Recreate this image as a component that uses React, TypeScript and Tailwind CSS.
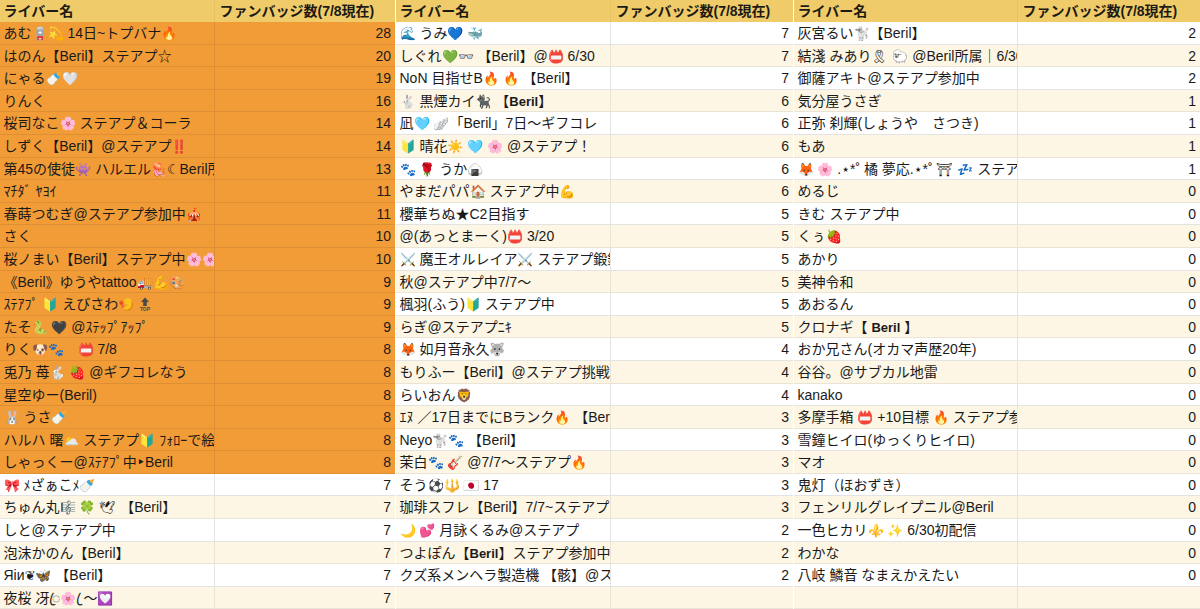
const col1: [string, number][] = [
  ["あむ🪫💫 14日~トプバナ🔥", 28],
  ["はのん【Beril】ステアプ☆", 20],
  ["にゃる🍼🤍", 19],
  ["りんく", 16],
  ["桜司なこ🌸 ステアプ＆コーラ", 14],
  ["しずく【Beril】@ステアプ‼️", 14],
  ["第45の使徒👾 ハルエル🪼☾Beril所属", 13],
  ["ﾏﾁﾀﾞ ﾔﾖｲ", 11],
  ["春蒔つむぎ@ステアプ参加中🎪", 11],
  ["さく", 10],
  ["桜ノまい【Beril】ステアプ中🌸🌸", 10],
  ["《Beril》ゆうやtattoo🚚💪🎨", 9],
  ["ｽﾃｱﾌﾟ 🔰 えびさわ🍤 🔝", 9],
  ["たそ🐍 🖤 @ｽﾃｯﾌﾟｱｯﾌﾟ", 9],
  ["りく🐶🐾　📛 7/8", 8],
  ["兎乃 苺🐇 🍓 @ギフコレなう", 8],
  ["星空ゆー(Beril)", 8],
  ["🐰 うさ🍼", 8],
  ["ハルハ 曙⛅ ステアプ🔰 ﾌｫﾛｰで絵", 8],
  ["しゃっくー@ｽﾃｱﾌﾟ中‣Beril", 8],
  ["🎀 ﾒざぁこﾒ🍼", 7],
  ["ちゅん丸🎼 🍀 🕊 【Beril】", 7],
  ["しと@ステアプ中", 7],
  ["泡沫かのん【Beril】", 7],
  ["Яiи❦🦋 【Beril】", 7],
  ["夜桜 冴ꦿ🌸 ꦿ〜💟", 7],
];

const col2: [string, number | null][] = [
  ["🌊 うみ💙 🐳", 7],
  ["しぐれ💚👓 【Beril】@📛 6/30", 7],
  ["NoN 目指せB🔥 🔥 【Beril】", 7],
  ["🐇 黒煙カイ🐈‍⬛ 【*Beril*】", 6],
  ["凪🩵 🪽「Beril」7日〜ギフコレ", 6],
  ["🔰 晴花☀️ 🩵 🌸 @ステアプ！", 6],
  ["🐾 🌹 うか🍙", 6],
  ["やまだパパ🏠 ステアプ中💪", 6],
  ["櫻華ちぬ★C2目指す", 5],
  ["@(あっとまーく)📛 3/20", 5],
  ["⚔️ 魔王オルレイア⚔️ ステアプ鍛錬中", 5],
  ["秋@ステアプ中7/7〜", 5],
  ["楓羽(ふう)🔰 ステアプ中", 5],
  ["らぎ@ステアプﾆｷ", 5],
  ["🦊 如月音永久🐺", 4],
  ["もりふー【Beril】@ステアプ挑戦中", 4],
  ["らいおん🦁", 4],
  ["ｴﾇ ／17日までにBランク🔥 【Beril】", 3],
  ["Neyo🐩🐾 【Beril】", 3],
  ["茉白🐾 🎸 @7/7〜ステアプ🔥", 3],
  ["そう⚽️🔱 🇯🇵 17", 3],
  ["珈琲スフレ【Beril】7/7~ステアプ", 3],
  ["🌙 💕 月詠くるみ@ステアプ", 2],
  ["つよぽん【*Beril*】ステアプ参加中", 2],
  ["クズ系メンヘラ製造機 【骸】@ステアプ", 2],
  ["", null],
];

const col3: [string, number | null][] = [
  ["灰宮るい🐩【Beril】", 2],
  ["結淺 みあり🎗 🐑 @Beril所属｜6/30", 2],
  ["御薩アキト@ステアプ参加中", 2],
  ["気分屋うさぎ", 1],
  ["正弥 刹輝(しょうや　さつき)", 1],
  ["もあ", 1],
  ["🦊 🌸 .⋆*˚ 橘 夢応.⋆*˚ ⛩ 💤 ステアプ", 1],
  ["めるじ", 0],
  ["きむ ステアプ中", 0],
  ["くぅ🍓", 0],
  ["あかり", 0],
  ["美神令和", 0],
  ["あおるん", 0],
  ["クロナギ【 *Beril* 】", 0],
  ["おか兄さん(オカマ声歴20年)", 0],
  ["谷谷。@サブカル地雷", 0],
  ["kanako", 0],
  ["多摩手箱 📛 +10目標 🔥 ステアプ参加中", 0],
  ["雪鐘ヒイロ(ゆっくりヒイロ)", 0],
  ["マオ", 0],
  ["鬼灯（ほおずき）", 0],
  ["フェンリルグレイプニル@Beril", 0],
  ["一色ヒカリ⚜️ ✨ 6/30初配信", 0],
  ["わかな", 0],
  ["八岐 鱗音 なまえかえたい", 0],
  ["", null],
];

// noto emoji runs wider than the screenshot's, so they get a smaller size
const emojiRe = /((?![★☆☾])\p{Extended_Pictographic}\uFE0F?(?:\u200D\p{Extended_Pictographic}\uFE0F?)*|[\u{1F1E6}-\u{1F1FF}]{2}|\*Beril\*)/u;

function TopMark() {
  return (
    <svg viewBox="0 0 14 14" className="inline-block w-[14px] h-[14px] align-[-2px]">
      <path d="M7 0.5 L11 5 H8.8 V9 H5.2 V5 H3 Z" fill="#4a4a46" />
      <text x="7" y="13.5" textAnchor="middle" fontSize="5" fontWeight="700" fill="#4a4a46">TOP</text>
    </svg>
  );
}

function Name({ text }: { text: string }) {
  const parts = text.split(emojiRe);
  return (
    <>
      {parts.map((p, i) => {
        if (i % 2 === 0) return p;
        if (p === "*Beril*") return <b key={i} className="text-[13px]">Beril</b>;
        if (p === "🔝") return <TopMark key={i} />;
        return <span key={i} className="text-[13px]">{p}</span>;
      })}
    </>
  );
}

function Block({ rows, orange = 0 }: { rows: [string, number | null][]; orange?: number }) {
  return (
    <div className="flex flex-col">
      <div className="flex h-[22px] bg-[#f0cb69] font-bold text-[#1c1a14]">
        <div className="w-[var(--n)] pl-[3.5px] leading-[23px] border-r border-[#e8c363]">ライバー名</div>
        <div className="flex-1 min-w-0 pl-[4.5px] leading-[23px] whitespace-nowrap overflow-hidden">ファンバッジ数(7/8現在)</div>
      </div>
      {rows.map(([name, count], i) => {
        const bg = i < orange ? "bg-[#f29c37] border-[#de8f33]" : (i - orange) % 2 === 0 ? "bg-white border-[#e3e3e3]" : "bg-[#fdf6e4] border-[#e9e4d6]";
        return (
          <div key={i} className={`flex h-[22.6px] border-b ${bg}`}>
            <div className={`w-[var(--n)] pl-[3.5px] leading-[23px] whitespace-nowrap overflow-hidden border-r ${bg}`}>
              <Name text={name} />
            </div>
            <div className="flex-1 pr-1 leading-[23px] text-right">{count}</div>
          </div>
        );
      })}
    </div>
  );
}

export default function App() {
  return (
    <div className="flex w-[1200px] h-[609px] overflow-hidden bg-white text-[14px] text-[#1a1a1a] font-['Liberation_Sans','Noto_Sans_CJK_JP','DejaVu_Sans',sans-serif]">
      <div className="[--n:215px] w-[395px] mr-px">
        <Block rows={col1} orange={20} />
      </div>
      <div className="[--n:215px] w-[397px] mr-px">
        <Block rows={col2} />
      </div>
      <div className="[--n:224px] w-[406px]">
        <Block rows={col3} />
      </div>
    </div>
  );
}
